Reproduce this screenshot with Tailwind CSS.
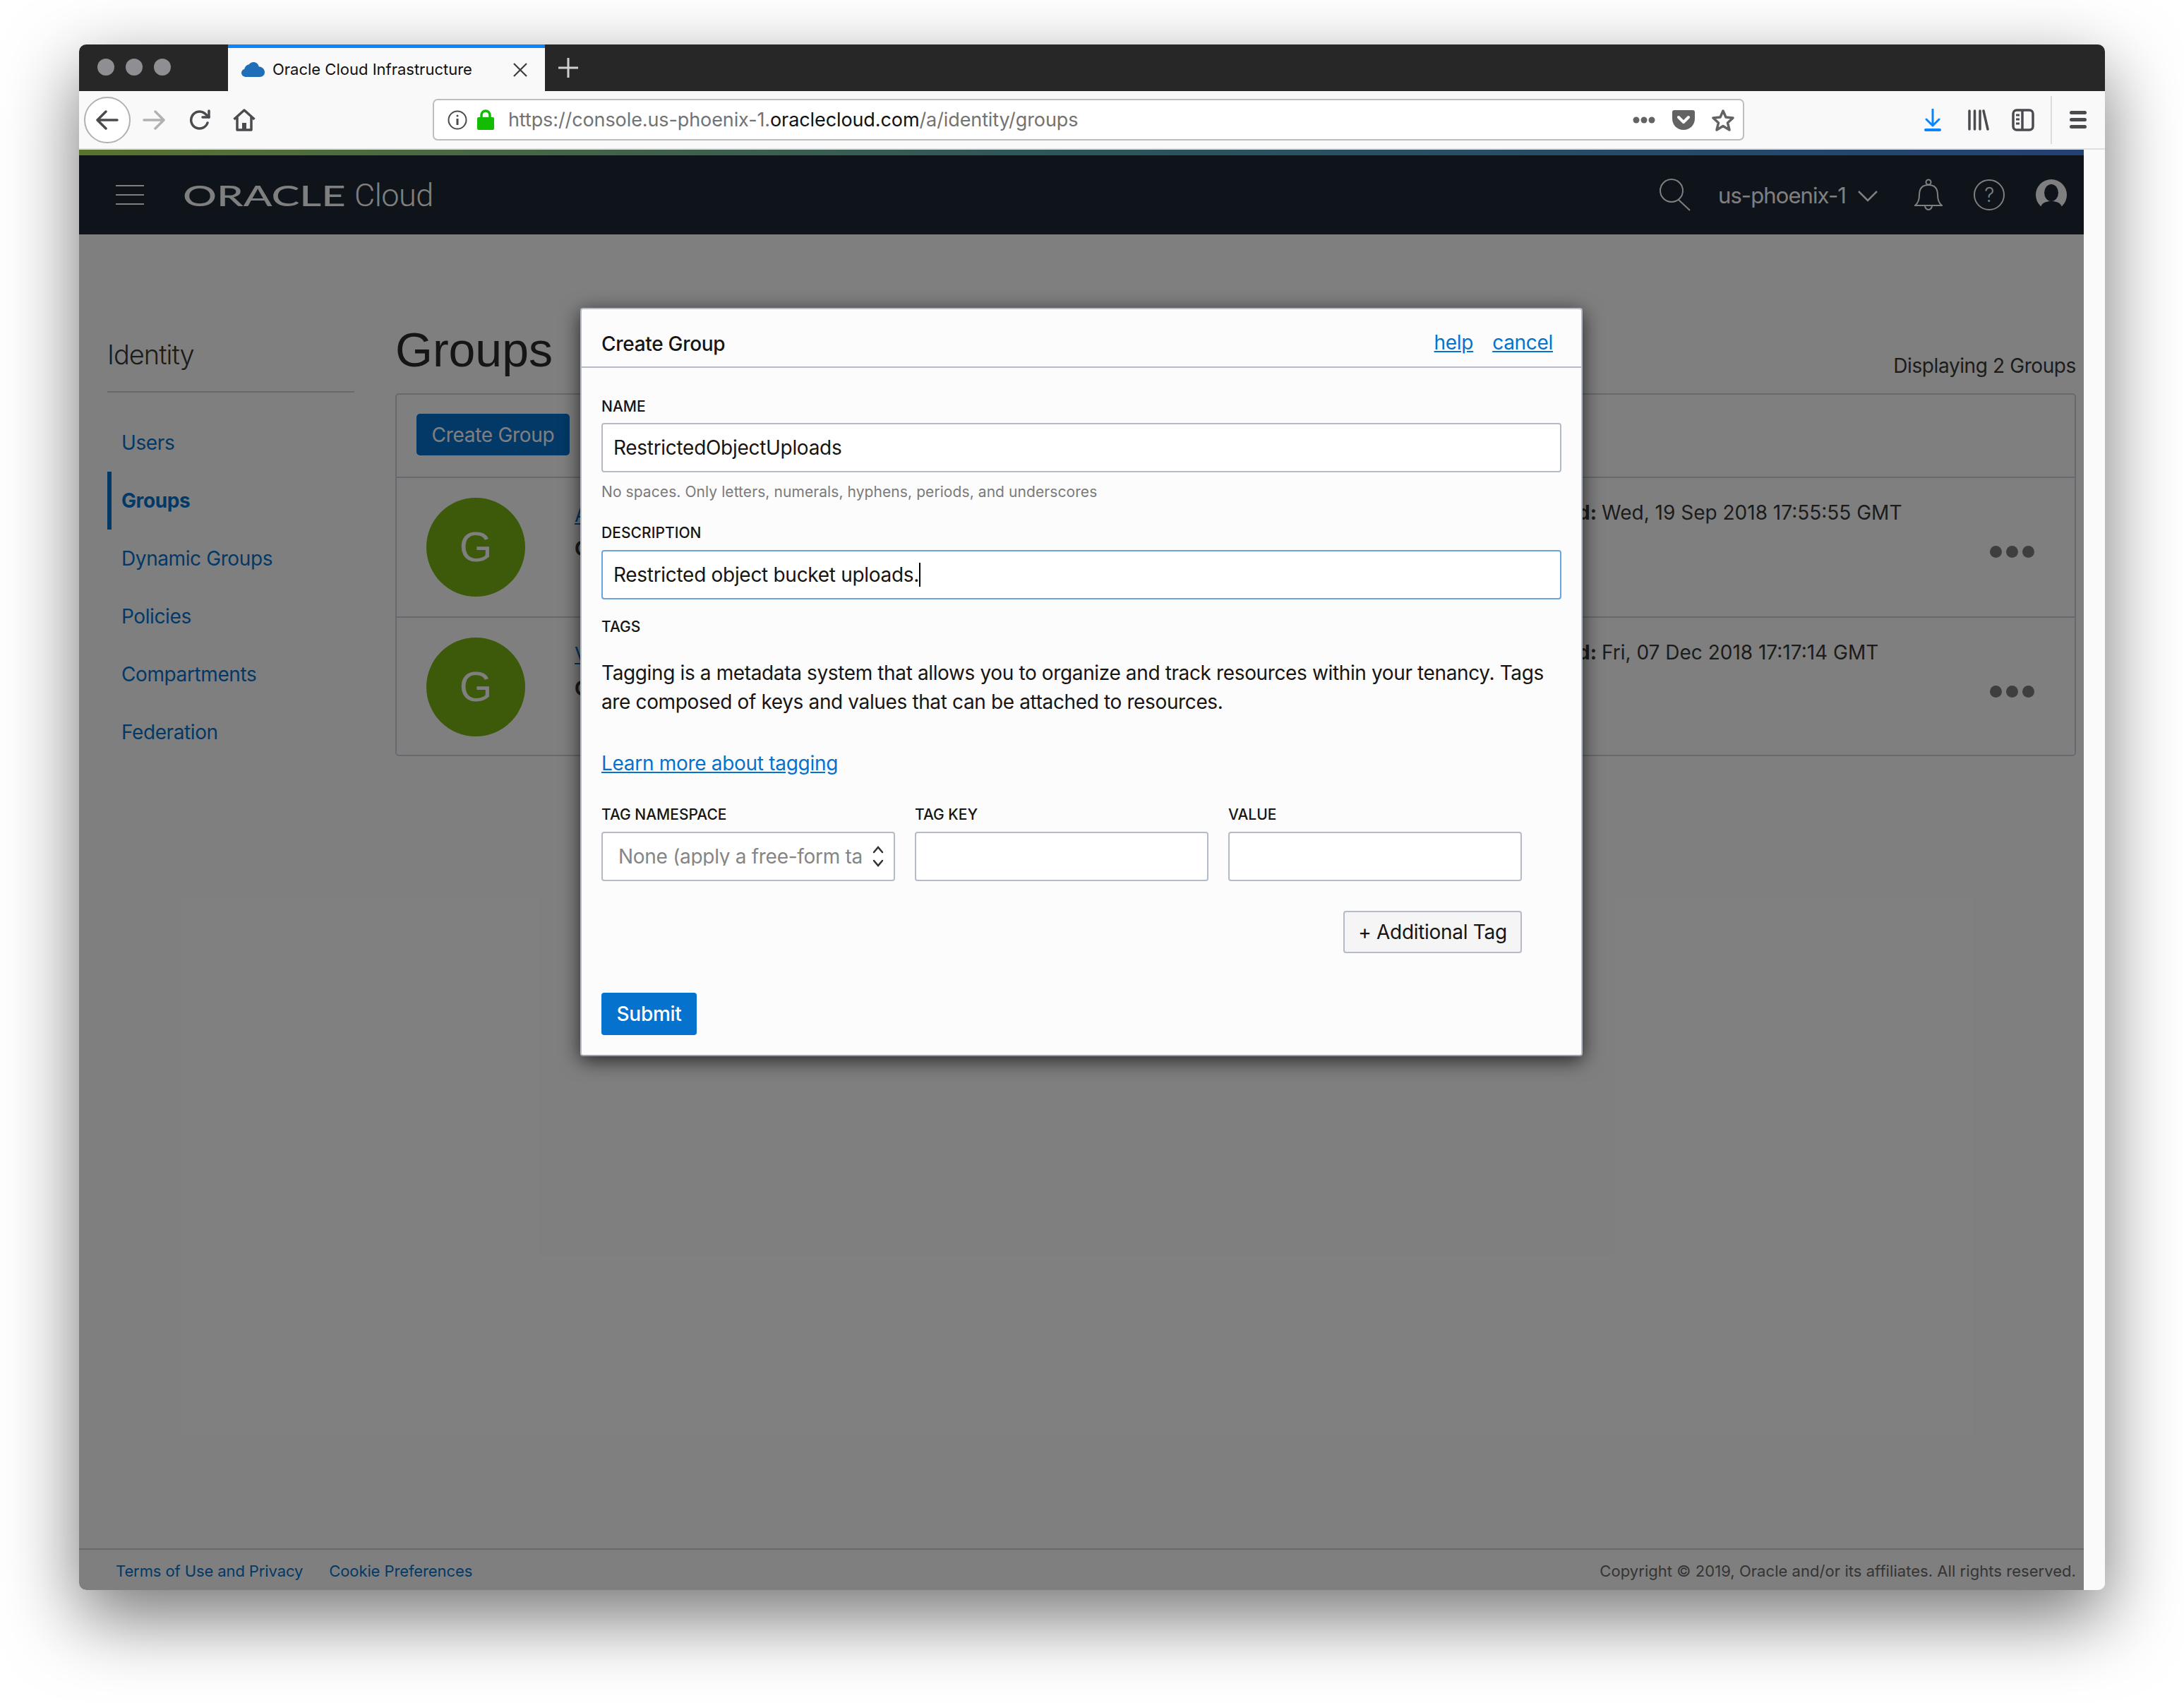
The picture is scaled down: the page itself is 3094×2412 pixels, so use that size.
<!DOCTYPE html>
<html lang="en">
<head>
    <meta charset="UTF-8">
    <title>Oracle Cloud Infrastructure</title>
    <script src="https://cdn.jsdelivr.net/npm/@tailwindcss/browser@4"></script>
</head>
<body class="w-[3094px] h-[2412px] bg-white overflow-hidden pt-[63px] pl-[112px] font-['Inter',sans-serif] text-[28px] tracking-[-0.3px]">
    <div class="w-[2870px] h-[2189px] flex flex-col rounded-[10px] overflow-hidden bg-[#fafafa] shadow-[0_38px_105px_rgba(0,0,0,0.55)]">

        <!-- tab strip -->
        <div class="h-[66px] shrink-0 flex bg-[#272727]">
            <div class="w-[211px] flex items-center gap-[16px] pl-[26px] pb-[2px]">
                <span class="w-[24px] h-[24px] rounded-full bg-[#8f8e92]"></span>
                <span class="w-[24px] h-[24px] rounded-full bg-[#8f8e92]"></span>
                <span class="w-[24px] h-[24px] rounded-full bg-[#8f8e92]"></span>
            </div>
            <div class="w-[449px] flex items-center bg-[#f9f9fa] border-t-[5px] border-[#0a84ff] pl-[19px] text-[22px] tracking-[0] text-[#111]">
                <svg class="w-[33px] h-[21px]" viewBox="0 0 33 21"><path fill="#1f6fb8" d="M7 21C3 21 0 18.500 0 15.200 0 12.500 1.800 10.500 4.300 9.800 5 6 8 3.500 10.500 3.500 12 1.200 14.500 0 17 0c4 0 7 2.500 7.700 6.300 4.500.2 8.300 3.500 8.300 8 0 4-3 6.700-7 6.700z"/></svg>
                <span class="ml-[11px] whitespace-nowrap">Oracle Cloud Infrastructure</span>
                <svg class="w-[20px] h-[20px] ml-[58px]" viewBox="0 0 20 20"><path stroke="#3c3c3c" stroke-width="2.200" d="M1 1l18 18M19 1L1 19"/></svg>
            </div>
            <svg class="w-[28px] h-[28px] ml-[19px] mt-[19px]" viewBox="0 0 28 28"><path stroke="#d0d0d0" stroke-width="3" d="M14 0v28M0 14h28"/></svg>
        </div>

        <!-- browser toolbar -->
        <div class="h-[83px] shrink-0 flex items-center bg-[#f9f9fa] border-b-2 border-[#e0e0e1]">
            <div class="w-[66px] h-[66px] ml-[7px] rounded-full bg-white border-2 border-[#b1b1b3] flex items-center justify-center">
                <svg class="w-[32px] h-[28px]" viewBox="0 0 32 28" fill="none" stroke="#4a4a4f" stroke-width="3.500" stroke-linecap="round" stroke-linejoin="round"><path d="M14 2L2 14l12 12M3 14h27"/></svg>
            </div>
            <svg class="w-[32px] h-[28px] ml-[17px]" viewBox="0 0 32 28" fill="none" stroke="#b1b1b3" stroke-width="3.500" stroke-linecap="round" stroke-linejoin="round"><path d="M18 2l12 12-12 12M29 14H2"/></svg>
            <svg class="w-[30px] h-[30px] ml-[34px]" viewBox="0 0 30 30" fill="none" stroke="#4a4a4f" stroke-width="3.500" stroke-linecap="round" stroke-linejoin="round"><path d="M26 19a12 12 0 1 1-4-13.500L28 11"/><path d="M28 2v9h-9"/></svg>
            <svg class="w-[32px] h-[32px] ml-[32px]" viewBox="0 0 32 32" fill="none" stroke="#4a4a4f" stroke-width="3.500" stroke-linejoin="round"><path d="M1.500 15L16 2l14.500 13M6 12v18h20V12"/><path fill="#4a4a4f" stroke="none" d="M13 20h6v10h-6z"/></svg>

            <div class="w-[1858px] h-[59px] ml-[251px] flex items-center bg-white border-2 border-[#bdbdbf] rounded-[7px] text-[27px] tracking-[-0.1px] text-[#737373]">
                <svg class="w-[28px] h-[28px] ml-[19px]" viewBox="0 0 28 28" fill="none" stroke="#4a4a4f" stroke-width="2"><circle cx="14" cy="14" r="12.500"/><path stroke-width="3" d="M14 12v9"/><circle cx="14" cy="8" r="1.500" fill="#4a4a4f" stroke="none"/></svg>
                <svg class="w-[24px] h-[29px] ml-[14px]" viewBox="0 0 24 29"><path fill="none" stroke="#12bc00" stroke-width="3.500" d="M6 13V8a6 6 0 0 1 12 0v5"/><rect y="11" width="24" height="18" rx="2" fill="#12bc00"/></svg>
                <span class="ml-[20px] mt-[2px] whitespace-nowrap">https://console.us-phoenix-1.<span class="text-[#111]">oraclecloud.com</span>/a/identity/groups</span>
                <div class="ml-auto flex items-center">
                    <svg class="w-[32px] h-[10px]" viewBox="0 0 32 10" fill="#636363"><circle cx="5" cy="5" r="4.500"/><circle cx="16" cy="5" r="4.500"/><circle cx="27" cy="5" r="4.500"/></svg>
                    <svg class="w-[32px] h-[28px] ml-[24px]" viewBox="0 0 32 28"><path fill="#636363" d="M3 0h26c2 0 3 1 3 3v9c0 9-7 16-16 16S0 21 0 12V3c0-2 1-3 3-3z"/><path fill="none" stroke="#fff" stroke-width="4" stroke-linecap="round" stroke-linejoin="round" d="M9 10l7 7 7-7"/></svg>
                    <svg class="w-[32px] h-[32px] ml-[24px] mr-[12px]" viewBox="0 0 32 32" fill="none" stroke="#636363" stroke-width="3.500" stroke-linejoin="round"><path d="M16 3l4 9 10 1-7.500 7 2.500 10-9-5.500L7 30l2.500-10L2 13l10-1z"/></svg>
                </div>
            </div>

            <svg class="w-[32px] h-[32px] ml-[251px]" viewBox="0 0 24 32" fill="none" stroke="#0a84ff" stroke-width="3" stroke-linecap="round" stroke-linejoin="round"><path d="M12 1v22M3 15l9 9 9-9"/><path stroke-width="4" d="M2 30h20"/></svg>
            <svg class="w-[30px] h-[30px] ml-[34px]" viewBox="0 0 30 30" fill="none" stroke="#4a4a4f" stroke-width="3.500" stroke-linecap="round"><path d="M2 2v26M9.500 2v26M17 2v26M22 2l6 26"/></svg>
            <svg class="w-[32px] h-[32px] ml-[32px]" viewBox="0 0 32 32" fill="none" stroke="#4a4a4f" stroke-width="3.500"><rect x="2" y="2" width="28" height="28" rx="5"/><path d="M15 2v28"/><path stroke-width="3" d="M6 9h5M6 15h5M6 21h5"/></svg>
            <span class="w-[2px] h-[68px] ml-[23px] bg-[#dcdcdc]"></span>
            <div class="w-[24px] ml-[25px] flex flex-col gap-[5px]">
                <span class="h-[5px] rounded-full bg-[#4a4a4f]"></span>
                <span class="h-[5px] rounded-full bg-[#4a4a4f]"></span>
                <span class="h-[5px] rounded-full bg-[#4a4a4f]"></span>
            </div>
        </div>

        <!-- page + modal -->
        <div class="relative flex-1 flex min-h-0">
            <div class="w-[2840px] flex flex-col bg-white">
                <div class="h-[8px] bg-gradient-to-r from-[#b4e65a] via-[#5aaab4] to-[#4682e6]"></div>

                <header class="h-[112px] shrink-0 flex items-center bg-[#1e2834] text-white">
                    <div class="w-[40px] ml-[52px] flex flex-col gap-[11px]">
                        <span class="h-[2px] bg-white"></span>
                        <span class="h-[2px] bg-white"></span>
                        <span class="h-[2px] bg-white"></span>
                    </div>
                    <span class="w-[228px] ml-[55px] text-[41px] font-medium font-['Lato',sans-serif] tracking-[0] leading-none scale-x-[1.46] origin-left">ORACLE</span>
                    <span class="ml-[15px] text-[45px] font-light font-['Roboto',sans-serif] tracking-[-0.5px] leading-none">Cloud</span>

                    <svg class="w-[46px] h-[46px] ml-auto" viewBox="0 0 46 46" fill="none" stroke="#fff" stroke-width="2"><circle cx="18" cy="17" r="16"/><path d="M28 30l16 15"/></svg>
                    <span class="ml-[38px] mt-[3px] text-[31px] tracking-[-0.9px]">us-phoenix-1</span>
                    <svg class="w-[28px] h-[16px] ml-[17px] mt-[3px]" viewBox="0 0 28 16" fill="none" stroke="#fff" stroke-width="2.500"><path d="M1 1l13 13L27 1"/></svg>
                    <svg class="w-[40px] h-[46px] ml-[52px]" viewBox="0 0 40 46" fill="none" stroke="#fff" stroke-width="2"><path d="M1 38c4-3 6-8 6-15 0-9 4-14 13-14s13 5 13 14c0 7 2 12 6 15z"/><circle cx="20" cy="5" r="3.500"/><path d="M15 38a5 6 0 0 0 10 0"/></svg>
                    <div class="w-[44px] h-[44px] ml-[44px] rounded-full border-2 border-white flex items-center justify-center text-[28px] font-light">?</div>
                    <svg class="w-[44px] h-[44px] ml-[44px] mr-[24px]" viewBox="0 0 44 44"><circle cx="22" cy="22" r="22" fill="#fff"/><ellipse cx="22" cy="19" rx="10" ry="12" fill="#1e2834"/><path fill="#1e2834" d="M7 39c2-6 8-8 15-8s13 2 15 8a21 21 0 0 1-30 0z"/></svg>
                </header>

                <div class="flex-1 flex pl-[40px] pr-[11px] min-h-0">
                    <aside class="w-[350px] shrink-0 pt-[147px] text-[#0572ce]">
                        <div class="h-[77px] border-b-2 border-[#ccd2dd] text-[38px] font-light tracking-[-1px] leading-[46px] text-[#383838]">Identity</div>
                        <nav class="mt-[30px] flex flex-col text-[28px] tracking-[-0.4px]">
                            <a class="h-[82px] flex items-center pl-[20px]">Users</a>
                            <a class="h-[82px] flex items-center pl-[14px] border-l-[6px] border-[#0572ce] font-bold">Groups</a>
                            <a class="h-[82px] flex items-center pl-[20px]">Dynamic Groups</a>
                            <a class="h-[82px] flex items-center pl-[20px]">Policies</a>
                            <a class="h-[82px] flex items-center pl-[20px]">Compartments</a>
                            <a class="h-[82px] flex items-center pl-[20px]">Federation</a>
                        </nav>
                    </aside>

                    <main class="ml-[58px] flex-1 min-w-0 pt-[123px]">
                        <div class="h-[85px] flex justify-between">
                            <h1 class="text-[68px] leading-[80px] font-['Liberation_Sans',sans-serif] text-[#2a2a2a] tracking-[0]">Groups</h1>
                            <span class="self-end mb-[2px] text-[28px] tracking-[-0.4px] leading-[40px] text-[#383838]">Displaying 2 Groups</span>
                        </div>
                        <div class="mt-[17px] border-2 border-[#ccd2dd] rounded-[5px]">
                            <div class="h-[118px] pl-[28px] pt-[27px] border-b-2 border-[#ccd2dd]">
                                <button class="h-[59px] w-[217px] rounded-[5px] bg-[#0572ce] text-white">Create Group</button>
                            </div>
                            <div class="h-[198px] flex items-start pl-[42px] pt-[28px] border-b-2 border-[#ccd2dd] text-[#383838]">
                                <div class="w-[140px] h-[140px] shrink-0 rounded-full bg-[#78b414] text-white flex items-center justify-center text-[60px] font-['Liberation_Sans',sans-serif]">G</div>
                                <div class="w-[9px] ml-[70px] shrink-0 overflow-hidden whitespace-nowrap leading-[48px]">
                                    <a class="text-[#0572ce] underline">Administrators</a>
                                    <div class="font-bold">OCID</div>
                                </div>
                                <div class="w-[22px] ml-[1417px] shrink-0 flex justify-end overflow-hidden tracking-[0]"><b class="whitespace-nowrap">Time Created:</b></div>
                                <span class="ml-[7px] whitespace-nowrap tracking-[0]">Wed, 19 Sep 2018 17:55:55 GMT</span>
                                <div class="ml-auto mr-[57px] mt-[68px] flex gap-[6px]">
                                    <span class="w-[17px] h-[17px] rounded-full bg-[#7c7c7c]"></span>
                                    <span class="w-[17px] h-[17px] rounded-full bg-[#7c7c7c]"></span>
                                    <span class="w-[17px] h-[17px] rounded-full bg-[#7c7c7c]"></span>
                                </div>
                            </div>
                            <div class="h-[194px] flex items-start pl-[42px] pt-[28px] text-[#383838]">
                                <div class="w-[140px] h-[140px] shrink-0 rounded-full bg-[#78b414] text-white flex items-center justify-center text-[60px] font-['Liberation_Sans',sans-serif]">G</div>
                                <div class="w-[9px] ml-[70px] shrink-0 overflow-hidden whitespace-nowrap leading-[48px]">
                                    <a class="text-[#0572ce] underline">Viewers</a>
                                    <div class="font-bold">OCID</div>
                                </div>
                                <div class="w-[22px] ml-[1417px] shrink-0 flex justify-end overflow-hidden tracking-[0]"><b class="whitespace-nowrap">Time Created:</b></div>
                                <span class="ml-[7px] whitespace-nowrap tracking-[0]">Fri, 07 Dec 2018 17:17:14 GMT</span>
                                <div class="ml-auto mr-[57px] mt-[68px] flex gap-[6px]">
                                    <span class="w-[17px] h-[17px] rounded-full bg-[#7c7c7c]"></span>
                                    <span class="w-[17px] h-[17px] rounded-full bg-[#7c7c7c]"></span>
                                    <span class="w-[17px] h-[17px] rounded-full bg-[#7c7c7c]"></span>
                                </div>
                            </div>
                        </div>
                    </main>
                </div>

                <footer class="h-[59px] shrink-0 flex items-center pt-[3px] pl-[52px] pr-[11px] border-t-2 border-[#ccd2dd] text-[22px] tracking-[-0.1px]">
                    <a class="text-[#0572ce]">Terms of Use and Privacy</a>
                    <a class="ml-[37px] text-[#0572ce]">Cookie Preferences</a>
                    <span class="ml-auto text-[#6a6a6a] tracking-[0.05px]">Copyright © 2019, Oracle and/or its affiliates. All rights reserved.</span>
                </footer>
            </div>
            <div class="w-[30px] bg-[#fafafa]"></div>

            <!-- dim layer -->
            <div class="absolute left-0 top-0 bottom-0 w-[2840px] bg-black/50"></div>

            <!-- Create Group dialog -->
            <div class="absolute left-[710px] top-[224px] w-[1420px] h-[1060px] rounded-[4px] bg-[#fcfcfc] border-2 border-[#b6bcc5] border-b-[#9aa0a8] shadow-[0_6px_28px_rgba(0,0,0,0.7)] text-[#161513]">
                <div class="h-[83px] flex items-center pl-[28px] pr-[40px] border-b-2 border-[#b6bcc5]">
                    <span class="mt-[16px] font-medium">Create Group</span>
                    <a class="ml-auto mt-[13px] text-[#0572ce] underline">help</a>
                    <a class="ml-[27px] mt-[13px] text-[#0572ce] underline">cancel</a>
                </div>
                <div class="pl-[28px]">
                    <label class="block pt-[42px] text-[21px] font-medium leading-[26px] tracking-[0]">NAME</label>
                    <input class="block mt-[10px] w-[1360px] h-[70px] px-[15px] bg-white border-2 border-[#b5bbc4] rounded-[4px]" value="RestrictedObjectUploads">
                    <p class="mt-[13px] text-[21px] leading-[30px] text-[#7a7a7a] tracking-[0.08px]">No spaces. Only letters, numerals, hyphens, periods, and underscores</p>
                    <label class="block mt-[30px] text-[21px] font-medium leading-[26px] tracking-[0.05px]">DESCRIPTION</label>
                    <div class="mt-[11px] w-[1360px] h-[70px] px-[15px] flex items-center bg-white border-2 border-[#6da2e0] rounded-[4px]">Restricted object bucket uploads.<span class="w-[2px] h-[34px] bg-black"></span></div>
                    <label class="block mt-[26px] text-[21px] font-medium leading-[26px] tracking-[0]">TAGS</label>
                    <p class="mt-[32px] w-[1360px] leading-[41px] tracking-[-0.37px]">Tagging is a metadata system that allows you to organize and track resources within your tenancy. Tags are composed of keys and values that can be attached to resources.</p>
                    <a class="block mt-[46px] leading-[41px] text-[#0572ce] underline">Learn more about tagging</a>

                    <div class="mt-[39px] w-[1304px] grid grid-cols-3 gap-x-[28px] gap-y-[11px] text-[21px] font-medium leading-[26px] tracking-[0]">
                        <label>TAG NAMESPACE</label>
                        <label>TAG KEY</label>
                        <label>VALUE</label>
                        <div class="h-[70px] flex items-center pl-[22px] bg-white border-2 border-[#b5bbc4] rounded-[4px] text-[28px] font-normal tracking-[-0.3px] text-[#858585]">
                            <span class="w-[347px] overflow-hidden whitespace-nowrap">None (apply a free-form tag)</span>
                            <svg class="w-[18px] h-[32px] ml-[12px]" viewBox="0 0 18 32" fill="none" stroke="#333" stroke-width="2.500" stroke-linecap="round"><path d="M3 10l6-7 6 7M3 22l6 7 6-7"/></svg>
                        </div>
                        <input class="h-[70px] bg-white border-2 border-[#b5bbc4] rounded-[4px]">
                        <input class="h-[70px] bg-white border-2 border-[#b5bbc4] rounded-[4px]">
                    </div>

                    <div class="mt-[42px] w-[1304px] flex justify-end">
                        <button class="w-[253px] h-[60px] bg-[#f5f5f6] border-2 border-[#b5bbc4] rounded-[4px]">+ Additional Tag</button>
                    </div>
                    <button class="block mt-[56px] w-[135px] h-[60px] rounded-[4px] bg-[#0572ce] text-white font-medium">Submit</button>
                </div>
            </div>
        </div>
    </div>
</body>
</html>
